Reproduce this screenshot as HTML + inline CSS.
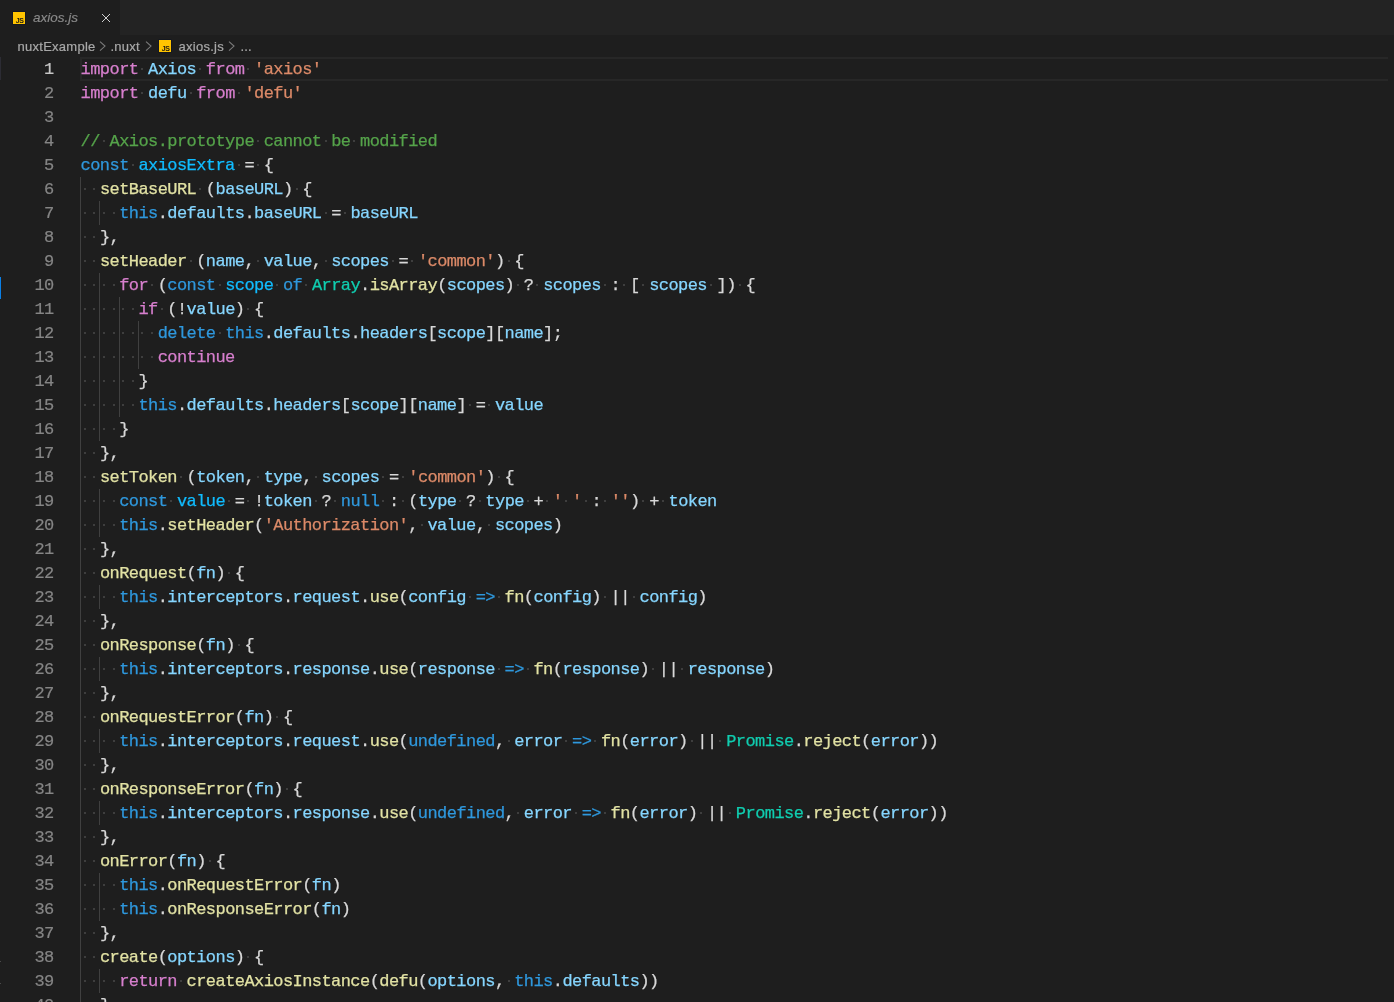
<!DOCTYPE html>
<html><head><meta charset="utf-8">
<style>
html,body{margin:0;padding:0;}
body{width:1394px;height:1002px;overflow:hidden;background:#1e1e1e;position:relative;font-family:"Liberation Sans",sans-serif;}
.tabs{position:absolute;left:0;top:0;width:1394px;height:35px;background:#232323;}
.tab{position:absolute;left:0;top:0;width:120px;height:35px;background:#1e1e1e;}
.tabname{position:absolute;left:33px;top:9px;font-style:italic;font-size:13.5px;color:#8a8a8a;line-height:17px;-webkit-text-stroke:0.15px currentColor;}
.close{position:absolute;left:101px;top:13px;width:10px;height:10px;}
.crumbs{position:absolute;left:0;top:35px;width:1394px;height:22px;}
.cr{position:absolute;top:3px;font-size:13px;letter-spacing:0.25px;color:#a8a8a8;-webkit-text-stroke:0.2px currentColor;line-height:17px;white-space:nowrap;}
.chev{position:absolute;top:3px;}
.js{position:absolute;}
.curline{position:absolute;left:80px;top:57px;width:1308px;height:24px;box-sizing:border-box;border:2px solid #272727;border-right:none;}
.mark{position:absolute;left:0;width:1px;}
.n{position:absolute;left:0;width:53.7px;text-align:right;font-family:"Liberation Mono",monospace;font-size:17px;letter-spacing:-0.6px;-webkit-text-stroke:0.2px currentColor;line-height:24px;height:24px;color:#858585;margin-top:1px;}
.n.a{color:#c6c6c6;}
.ln{position:absolute;left:80.6px;height:24px;line-height:24px;font-family:"Liberation Mono",monospace;font-size:17px;letter-spacing:-0.568px;-webkit-text-stroke:0.25px currentColor;white-space:pre;color:#d4d4d4;margin-top:1px;}
u{position:absolute;width:2px;height:2px;background:#3e3e3e;}
.ln b{font-weight:normal;}
.g{position:absolute;width:1px;background:#404040;}
.k{color:#d77fcd}.s{color:#2f98dd}.v{color:#86d6ff}.c{color:#10bcff}.f{color:#e2e2a4}.q{color:#dc8a68}.m{color:#55a34a}.t{color:#10cdb0}.p{color:#d8d8d8}
</style></head><body>
<div id="wrap" style="position:absolute;left:0;top:0;width:1394px;height:1002px;will-change:transform;">
<div class="tabs">
  <div class="tab">
    <svg class="js" style="left:12px;top:11px" width="14" height="14" viewBox="-1 -1 14 14"><rect x="-0.5" y="-0.5" width="13" height="13" fill="#0b1222"/><rect x="0" y="0" width="12" height="12" fill="#ffc400"/><text x="10.6" y="11" text-anchor="end" font-family="Liberation Sans" font-weight="bold" font-size="7" fill="#1c1a10" letter-spacing="-0.4">JS</text></svg>
    <div class="tabname">axios.js</div>
    <svg class="close" viewBox="0 0 10 10"><path d="M1 1L9 9M9 1L1 9" stroke="#d0d0d0" stroke-width="1"/></svg>
  </div>
</div>
<div class="crumbs">
<span class="cr" style="left:17.6px">nuxtExample</span>
<svg class="chev" style="left:99px" width="8" height="17" viewBox="0 0 8 17"><path d="M1 3.6L6 8.1L1 12.6" fill="none" stroke="#7a7a7a" stroke-width="1.1"/></svg>
<span class="cr" style="left:110.5px">.nuxt</span>
<svg class="chev" style="left:145.2px" width="8" height="17" viewBox="0 0 8 17"><path d="M1 3.6L6 8.1L1 12.6" fill="none" stroke="#7a7a7a" stroke-width="1.1"/></svg>
<svg class="js" style="left:158px;top:4px" width="14" height="14" viewBox="-1 -1 14 14"><rect x="-0.5" y="-0.5" width="13" height="13" fill="#0b1222"/><rect x="0" y="0" width="12" height="12" fill="#ffc400"/><text x="10.6" y="11" text-anchor="end" font-family="Liberation Sans" font-weight="bold" font-size="7" fill="#1c1a10" letter-spacing="-0.4">JS</text></svg>
<span class="cr" style="left:178.6px">axios.js</span>
<svg class="chev" style="left:228.2px" width="8" height="17" viewBox="0 0 8 17"><path d="M1 3.6L6 8.1L1 12.6" fill="none" stroke="#7a7a7a" stroke-width="1.1"/></svg>
<span class="cr" style="left:240.4px">...</span>
</div>
<div class="curline"></div>
<div class="mark" style="top:57px;height:23px;background:#2c2c34"></div>
<div class="mark" style="top:277px;height:22px;background:#0a7fe6"></div>
<div class="mark" style="top:961px;height:1px;background:#4a4a4a"></div>
<div class="mark" style="top:983px;height:1px;background:#4a4a4a"></div>
<div class="g" style="left:80px;top:177px;height:840px"></div>
<div class="g" style="left:99px;top:201px;height:24px"></div>
<div class="g" style="left:99px;top:273px;height:168px"></div>
<div class="g" style="left:99px;top:489px;height:48px"></div>
<div class="g" style="left:99px;top:585px;height:24px"></div>
<div class="g" style="left:99px;top:657px;height:24px"></div>
<div class="g" style="left:99px;top:729px;height:24px"></div>
<div class="g" style="left:99px;top:801px;height:24px"></div>
<div class="g" style="left:99px;top:873px;height:48px"></div>
<div class="g" style="left:99px;top:969px;height:24px"></div>
<div class="g" style="left:119px;top:297px;height:120px"></div>
<div class="g" style="left:138px;top:321px;height:48px"></div>
<div class="n a" style="top:57px">1</div>
<div class="n" style="top:81px">2</div>
<div class="n" style="top:105px">3</div>
<div class="n" style="top:129px">4</div>
<div class="n" style="top:153px">5</div>
<div class="n" style="top:177px">6</div>
<div class="n" style="top:201px">7</div>
<div class="n" style="top:225px">8</div>
<div class="n" style="top:249px">9</div>
<div class="n" style="top:273px">10</div>
<div class="n" style="top:297px">11</div>
<div class="n" style="top:321px">12</div>
<div class="n" style="top:345px">13</div>
<div class="n" style="top:369px">14</div>
<div class="n" style="top:393px">15</div>
<div class="n" style="top:417px">16</div>
<div class="n" style="top:441px">17</div>
<div class="n" style="top:465px">18</div>
<div class="n" style="top:489px">19</div>
<div class="n" style="top:513px">20</div>
<div class="n" style="top:537px">21</div>
<div class="n" style="top:561px">22</div>
<div class="n" style="top:585px">23</div>
<div class="n" style="top:609px">24</div>
<div class="n" style="top:633px">25</div>
<div class="n" style="top:657px">26</div>
<div class="n" style="top:681px">27</div>
<div class="n" style="top:705px">28</div>
<div class="n" style="top:729px">29</div>
<div class="n" style="top:753px">30</div>
<div class="n" style="top:777px">31</div>
<div class="n" style="top:801px">32</div>
<div class="n" style="top:825px">33</div>
<div class="n" style="top:849px">34</div>
<div class="n" style="top:873px">35</div>
<div class="n" style="top:897px">36</div>
<div class="n" style="top:921px">37</div>
<div class="n" style="top:945px">38</div>
<div class="n" style="top:969px">39</div>
<div class="n" style="top:993px">40</div>
<u style="left:141.4px;top:67.6px"></u><u style="left:199.2px;top:67.6px"></u><u style="left:247.4px;top:67.6px"></u><u style="left:141.4px;top:91.6px"></u><u style="left:189.6px;top:91.6px"></u><u style="left:237.7px;top:91.6px"></u><u style="left:102.9px;top:139.6px"></u><u style="left:257.0px;top:139.6px"></u><u style="left:324.5px;top:139.6px"></u><u style="left:353.4px;top:139.6px"></u><u style="left:131.8px;top:163.6px"></u><u style="left:237.7px;top:163.6px"></u><u style="left:257.0px;top:163.6px"></u><u style="left:83.6px;top:187.6px"></u><u style="left:93.2px;top:187.6px"></u><u style="left:199.2px;top:187.6px"></u><u style="left:295.5px;top:187.6px"></u><u style="left:83.6px;top:211.6px"></u><u style="left:93.2px;top:211.6px"></u><u style="left:102.9px;top:211.6px"></u><u style="left:112.5px;top:211.6px"></u><u style="left:324.5px;top:211.6px"></u><u style="left:343.7px;top:211.6px"></u><u style="left:83.6px;top:235.6px"></u><u style="left:93.2px;top:235.6px"></u><u style="left:83.6px;top:259.6px"></u><u style="left:93.2px;top:259.6px"></u><u style="left:189.6px;top:259.6px"></u><u style="left:257.0px;top:259.6px"></u><u style="left:324.5px;top:259.6px"></u><u style="left:391.9px;top:259.6px"></u><u style="left:411.2px;top:259.6px"></u><u style="left:507.5px;top:259.6px"></u><u style="left:83.6px;top:283.6px"></u><u style="left:93.2px;top:283.6px"></u><u style="left:102.9px;top:283.6px"></u><u style="left:112.5px;top:283.6px"></u><u style="left:151.0px;top:283.6px"></u><u style="left:218.5px;top:283.6px"></u><u style="left:276.3px;top:283.6px"></u><u style="left:305.2px;top:283.6px"></u><u style="left:517.1px;top:283.6px"></u><u style="left:536.4px;top:283.6px"></u><u style="left:603.8px;top:283.6px"></u><u style="left:623.1px;top:283.6px"></u><u style="left:642.4px;top:283.6px"></u><u style="left:709.8px;top:283.6px"></u><u style="left:738.7px;top:283.6px"></u><u style="left:83.6px;top:307.6px"></u><u style="left:93.2px;top:307.6px"></u><u style="left:102.9px;top:307.6px"></u><u style="left:112.5px;top:307.6px"></u><u style="left:122.1px;top:307.6px"></u><u style="left:131.8px;top:307.6px"></u><u style="left:160.7px;top:307.6px"></u><u style="left:247.4px;top:307.6px"></u><u style="left:83.6px;top:331.6px"></u><u style="left:93.2px;top:331.6px"></u><u style="left:102.9px;top:331.6px"></u><u style="left:112.5px;top:331.6px"></u><u style="left:122.1px;top:331.6px"></u><u style="left:131.8px;top:331.6px"></u><u style="left:141.4px;top:331.6px"></u><u style="left:151.0px;top:331.6px"></u><u style="left:218.5px;top:331.6px"></u><u style="left:83.6px;top:355.6px"></u><u style="left:93.2px;top:355.6px"></u><u style="left:102.9px;top:355.6px"></u><u style="left:112.5px;top:355.6px"></u><u style="left:122.1px;top:355.6px"></u><u style="left:131.8px;top:355.6px"></u><u style="left:141.4px;top:355.6px"></u><u style="left:151.0px;top:355.6px"></u><u style="left:83.6px;top:379.6px"></u><u style="left:93.2px;top:379.6px"></u><u style="left:102.9px;top:379.6px"></u><u style="left:112.5px;top:379.6px"></u><u style="left:122.1px;top:379.6px"></u><u style="left:131.8px;top:379.6px"></u><u style="left:83.6px;top:403.6px"></u><u style="left:93.2px;top:403.6px"></u><u style="left:102.9px;top:403.6px"></u><u style="left:112.5px;top:403.6px"></u><u style="left:122.1px;top:403.6px"></u><u style="left:131.8px;top:403.6px"></u><u style="left:469.0px;top:403.6px"></u><u style="left:488.2px;top:403.6px"></u><u style="left:83.6px;top:427.6px"></u><u style="left:93.2px;top:427.6px"></u><u style="left:102.9px;top:427.6px"></u><u style="left:112.5px;top:427.6px"></u><u style="left:83.6px;top:451.6px"></u><u style="left:93.2px;top:451.6px"></u><u style="left:83.6px;top:475.6px"></u><u style="left:93.2px;top:475.6px"></u><u style="left:179.9px;top:475.6px"></u><u style="left:257.0px;top:475.6px"></u><u style="left:314.8px;top:475.6px"></u><u style="left:382.3px;top:475.6px"></u><u style="left:401.5px;top:475.6px"></u><u style="left:497.9px;top:475.6px"></u><u style="left:83.6px;top:499.6px"></u><u style="left:93.2px;top:499.6px"></u><u style="left:102.9px;top:499.6px"></u><u style="left:112.5px;top:499.6px"></u><u style="left:170.3px;top:499.6px"></u><u style="left:228.1px;top:499.6px"></u><u style="left:247.4px;top:499.6px"></u><u style="left:314.8px;top:499.6px"></u><u style="left:334.1px;top:499.6px"></u><u style="left:382.3px;top:499.6px"></u><u style="left:401.5px;top:499.6px"></u><u style="left:459.3px;top:499.6px"></u><u style="left:478.6px;top:499.6px"></u><u style="left:526.8px;top:499.6px"></u><u style="left:546.0px;top:499.6px"></u><u style="left:565.3px;top:499.6px"></u><u style="left:584.6px;top:499.6px"></u><u style="left:603.8px;top:499.6px"></u><u style="left:642.4px;top:499.6px"></u><u style="left:661.6px;top:499.6px"></u><u style="left:83.6px;top:523.6px"></u><u style="left:93.2px;top:523.6px"></u><u style="left:102.9px;top:523.6px"></u><u style="left:112.5px;top:523.6px"></u><u style="left:420.8px;top:523.6px"></u><u style="left:488.2px;top:523.6px"></u><u style="left:83.6px;top:547.6px"></u><u style="left:93.2px;top:547.6px"></u><u style="left:83.6px;top:571.6px"></u><u style="left:93.2px;top:571.6px"></u><u style="left:228.1px;top:571.6px"></u><u style="left:83.6px;top:595.6px"></u><u style="left:93.2px;top:595.6px"></u><u style="left:102.9px;top:595.6px"></u><u style="left:112.5px;top:595.6px"></u><u style="left:469.0px;top:595.6px"></u><u style="left:497.9px;top:595.6px"></u><u style="left:603.8px;top:595.6px"></u><u style="left:632.7px;top:595.6px"></u><u style="left:83.6px;top:619.6px"></u><u style="left:93.2px;top:619.6px"></u><u style="left:83.6px;top:643.6px"></u><u style="left:93.2px;top:643.6px"></u><u style="left:237.7px;top:643.6px"></u><u style="left:83.6px;top:667.6px"></u><u style="left:93.2px;top:667.6px"></u><u style="left:102.9px;top:667.6px"></u><u style="left:112.5px;top:667.6px"></u><u style="left:497.9px;top:667.6px"></u><u style="left:526.8px;top:667.6px"></u><u style="left:652.0px;top:667.6px"></u><u style="left:680.9px;top:667.6px"></u><u style="left:83.6px;top:691.6px"></u><u style="left:93.2px;top:691.6px"></u><u style="left:83.6px;top:715.6px"></u><u style="left:93.2px;top:715.6px"></u><u style="left:276.3px;top:715.6px"></u><u style="left:83.6px;top:739.6px"></u><u style="left:93.2px;top:739.6px"></u><u style="left:102.9px;top:739.6px"></u><u style="left:112.5px;top:739.6px"></u><u style="left:507.5px;top:739.6px"></u><u style="left:565.3px;top:739.6px"></u><u style="left:594.2px;top:739.6px"></u><u style="left:690.5px;top:739.6px"></u><u style="left:719.4px;top:739.6px"></u><u style="left:83.6px;top:763.6px"></u><u style="left:93.2px;top:763.6px"></u><u style="left:83.6px;top:787.6px"></u><u style="left:93.2px;top:787.6px"></u><u style="left:285.9px;top:787.6px"></u><u style="left:83.6px;top:811.6px"></u><u style="left:93.2px;top:811.6px"></u><u style="left:102.9px;top:811.6px"></u><u style="left:112.5px;top:811.6px"></u><u style="left:517.1px;top:811.6px"></u><u style="left:574.9px;top:811.6px"></u><u style="left:603.8px;top:811.6px"></u><u style="left:700.2px;top:811.6px"></u><u style="left:729.1px;top:811.6px"></u><u style="left:83.6px;top:835.6px"></u><u style="left:93.2px;top:835.6px"></u><u style="left:83.6px;top:859.6px"></u><u style="left:93.2px;top:859.6px"></u><u style="left:208.8px;top:859.6px"></u><u style="left:83.6px;top:883.6px"></u><u style="left:93.2px;top:883.6px"></u><u style="left:102.9px;top:883.6px"></u><u style="left:112.5px;top:883.6px"></u><u style="left:83.6px;top:907.6px"></u><u style="left:93.2px;top:907.6px"></u><u style="left:102.9px;top:907.6px"></u><u style="left:112.5px;top:907.6px"></u><u style="left:83.6px;top:931.6px"></u><u style="left:93.2px;top:931.6px"></u><u style="left:83.6px;top:955.6px"></u><u style="left:93.2px;top:955.6px"></u><u style="left:247.4px;top:955.6px"></u><u style="left:83.6px;top:979.6px"></u><u style="left:93.2px;top:979.6px"></u><u style="left:102.9px;top:979.6px"></u><u style="left:112.5px;top:979.6px"></u><u style="left:179.9px;top:979.6px"></u><u style="left:507.5px;top:979.6px"></u><u style="left:83.6px;top:1003.6px"></u><u style="left:93.2px;top:1003.6px"></u>
<div class="ln" style="top:57px"><b class="k">import</b> <b class="v">Axios</b> <b class="k">from</b> <b class="q">&#x27;axios&#x27;</b></div>
<div class="ln" style="top:81px"><b class="k">import</b> <b class="v">defu</b> <b class="k">from</b> <b class="q">&#x27;defu&#x27;</b></div>
<div class="ln" style="top:105px"></div>
<div class="ln" style="top:129px"><b class="m">//</b> <b class="m">Axios.prototype</b> <b class="m">cannot</b> <b class="m">be</b> <b class="m">modified</b></div>
<div class="ln" style="top:153px"><b class="s">const</b> <b class="c">axiosExtra</b> <b class="p">=</b> <b class="p">{</b></div>
<div class="ln" style="top:177px">  <b class="f">setBaseURL</b> <b class="p">(</b><b class="v">baseURL</b><b class="p">)</b> <b class="p">{</b></div>
<div class="ln" style="top:201px">    <b class="s">this</b><b class="p">.</b><b class="v">defaults</b><b class="p">.</b><b class="v">baseURL</b> <b class="p">=</b> <b class="v">baseURL</b></div>
<div class="ln" style="top:225px">  <b class="p">},</b></div>
<div class="ln" style="top:249px">  <b class="f">setHeader</b> <b class="p">(</b><b class="v">name</b><b class="p">,</b> <b class="v">value</b><b class="p">,</b> <b class="v">scopes</b> <b class="p">=</b> <b class="q">&#x27;common&#x27;</b><b class="p">)</b> <b class="p">{</b></div>
<div class="ln" style="top:273px">    <b class="k">for</b> <b class="p">(</b><b class="s">const</b> <b class="c">scope</b> <b class="s">of</b> <b class="t">Array</b><b class="p">.</b><b class="f">isArray</b><b class="p">(</b><b class="v">scopes</b><b class="p">)</b> <b class="p">?</b> <b class="v">scopes</b> <b class="p">:</b> <b class="p">[</b> <b class="v">scopes</b> <b class="p">])</b> <b class="p">{</b></div>
<div class="ln" style="top:297px">      <b class="k">if</b> <b class="p">(!</b><b class="v">value</b><b class="p">)</b> <b class="p">{</b></div>
<div class="ln" style="top:321px">        <b class="s">delete</b> <b class="s">this</b><b class="p">.</b><b class="v">defaults</b><b class="p">.</b><b class="v">headers</b><b class="p">[</b><b class="v">scope</b><b class="p">][</b><b class="v">name</b><b class="p">];</b></div>
<div class="ln" style="top:345px">        <b class="k">continue</b></div>
<div class="ln" style="top:369px">      <b class="p">}</b></div>
<div class="ln" style="top:393px">      <b class="s">this</b><b class="p">.</b><b class="v">defaults</b><b class="p">.</b><b class="v">headers</b><b class="p">[</b><b class="v">scope</b><b class="p">][</b><b class="v">name</b><b class="p">]</b> <b class="p">=</b> <b class="v">value</b></div>
<div class="ln" style="top:417px">    <b class="p">}</b></div>
<div class="ln" style="top:441px">  <b class="p">},</b></div>
<div class="ln" style="top:465px">  <b class="f">setToken</b> <b class="p">(</b><b class="v">token</b><b class="p">,</b> <b class="v">type</b><b class="p">,</b> <b class="v">scopes</b> <b class="p">=</b> <b class="q">&#x27;common&#x27;</b><b class="p">)</b> <b class="p">{</b></div>
<div class="ln" style="top:489px">    <b class="s">const</b> <b class="c">value</b> <b class="p">=</b> <b class="p">!</b><b class="v">token</b> <b class="p">?</b> <b class="s">null</b> <b class="p">:</b> <b class="p">(</b><b class="v">type</b> <b class="p">?</b> <b class="v">type</b> <b class="p">+</b> <b class="q">&#x27;</b> <b class="q">&#x27;</b> <b class="p">:</b> <b class="q">&#x27;&#x27;</b><b class="p">)</b> <b class="p">+</b> <b class="v">token</b></div>
<div class="ln" style="top:513px">    <b class="s">this</b><b class="p">.</b><b class="f">setHeader</b><b class="p">(</b><b class="q">&#x27;Authorization&#x27;</b><b class="p">,</b> <b class="v">value</b><b class="p">,</b> <b class="v">scopes</b><b class="p">)</b></div>
<div class="ln" style="top:537px">  <b class="p">},</b></div>
<div class="ln" style="top:561px">  <b class="f">onRequest</b><b class="p">(</b><b class="v">fn</b><b class="p">)</b> <b class="p">{</b></div>
<div class="ln" style="top:585px">    <b class="s">this</b><b class="p">.</b><b class="v">interceptors</b><b class="p">.</b><b class="v">request</b><b class="p">.</b><b class="f">use</b><b class="p">(</b><b class="v">config</b> <b class="s">=&gt;</b> <b class="f">fn</b><b class="p">(</b><b class="v">config</b><b class="p">)</b> <b class="p">||</b> <b class="v">config</b><b class="p">)</b></div>
<div class="ln" style="top:609px">  <b class="p">},</b></div>
<div class="ln" style="top:633px">  <b class="f">onResponse</b><b class="p">(</b><b class="v">fn</b><b class="p">)</b> <b class="p">{</b></div>
<div class="ln" style="top:657px">    <b class="s">this</b><b class="p">.</b><b class="v">interceptors</b><b class="p">.</b><b class="v">response</b><b class="p">.</b><b class="f">use</b><b class="p">(</b><b class="v">response</b> <b class="s">=&gt;</b> <b class="f">fn</b><b class="p">(</b><b class="v">response</b><b class="p">)</b> <b class="p">||</b> <b class="v">response</b><b class="p">)</b></div>
<div class="ln" style="top:681px">  <b class="p">},</b></div>
<div class="ln" style="top:705px">  <b class="f">onRequestError</b><b class="p">(</b><b class="v">fn</b><b class="p">)</b> <b class="p">{</b></div>
<div class="ln" style="top:729px">    <b class="s">this</b><b class="p">.</b><b class="v">interceptors</b><b class="p">.</b><b class="v">request</b><b class="p">.</b><b class="f">use</b><b class="p">(</b><b class="s">undefined</b><b class="p">,</b> <b class="v">error</b> <b class="s">=&gt;</b> <b class="f">fn</b><b class="p">(</b><b class="v">error</b><b class="p">)</b> <b class="p">||</b> <b class="t">Promise</b><b class="p">.</b><b class="f">reject</b><b class="p">(</b><b class="v">error</b><b class="p">))</b></div>
<div class="ln" style="top:753px">  <b class="p">},</b></div>
<div class="ln" style="top:777px">  <b class="f">onResponseError</b><b class="p">(</b><b class="v">fn</b><b class="p">)</b> <b class="p">{</b></div>
<div class="ln" style="top:801px">    <b class="s">this</b><b class="p">.</b><b class="v">interceptors</b><b class="p">.</b><b class="v">response</b><b class="p">.</b><b class="f">use</b><b class="p">(</b><b class="s">undefined</b><b class="p">,</b> <b class="v">error</b> <b class="s">=&gt;</b> <b class="f">fn</b><b class="p">(</b><b class="v">error</b><b class="p">)</b> <b class="p">||</b> <b class="t">Promise</b><b class="p">.</b><b class="f">reject</b><b class="p">(</b><b class="v">error</b><b class="p">))</b></div>
<div class="ln" style="top:825px">  <b class="p">},</b></div>
<div class="ln" style="top:849px">  <b class="f">onError</b><b class="p">(</b><b class="v">fn</b><b class="p">)</b> <b class="p">{</b></div>
<div class="ln" style="top:873px">    <b class="s">this</b><b class="p">.</b><b class="f">onRequestError</b><b class="p">(</b><b class="v">fn</b><b class="p">)</b></div>
<div class="ln" style="top:897px">    <b class="s">this</b><b class="p">.</b><b class="f">onResponseError</b><b class="p">(</b><b class="v">fn</b><b class="p">)</b></div>
<div class="ln" style="top:921px">  <b class="p">},</b></div>
<div class="ln" style="top:945px">  <b class="f">create</b><b class="p">(</b><b class="v">options</b><b class="p">)</b> <b class="p">{</b></div>
<div class="ln" style="top:969px">    <b class="k">return</b> <b class="f">createAxiosInstance</b><b class="p">(</b><b class="f">defu</b><b class="p">(</b><b class="v">options</b><b class="p">,</b> <b class="s">this</b><b class="p">.</b><b class="v">defaults</b><b class="p">))</b></div>
<div class="ln" style="top:993px">  <b class="p">}</b></div>
</div>
</body></html>
